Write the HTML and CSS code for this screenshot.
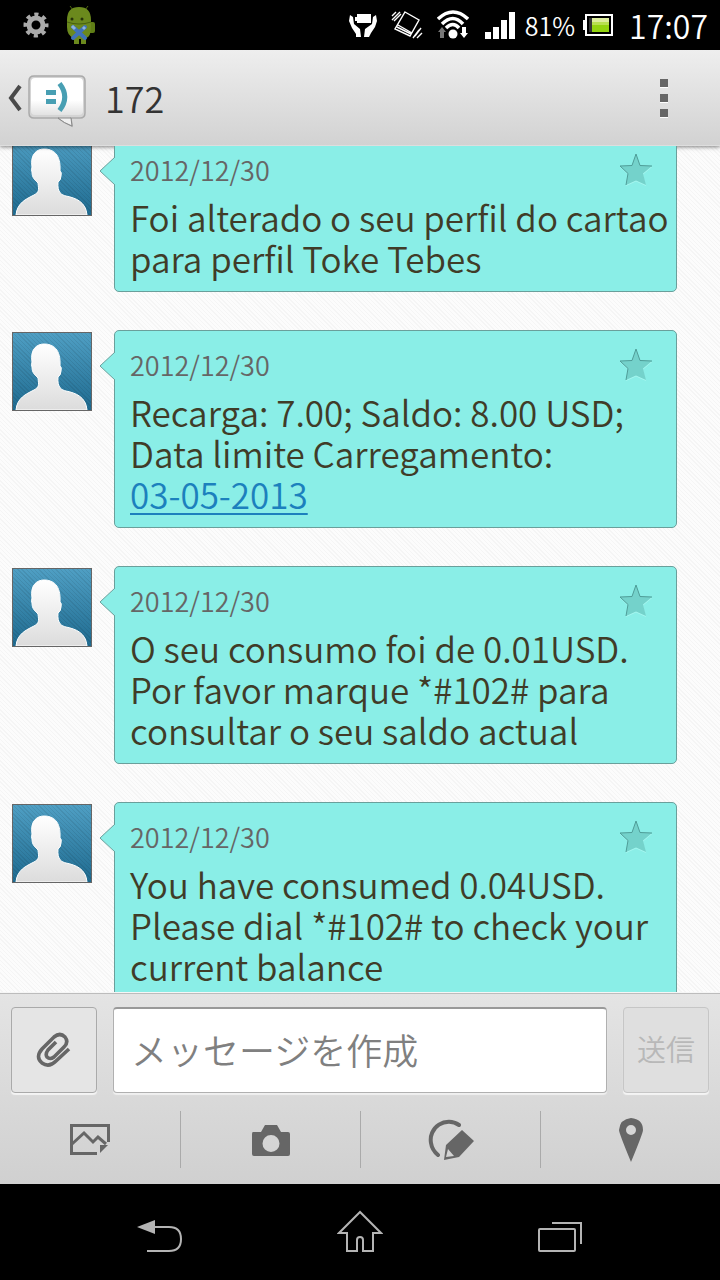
FILE: index.html
```html
<!DOCTYPE html>
<html lang="ja">
<head>
<meta charset="utf-8">
<meta name="viewport" content="width=device-width, initial-scale=1">
<title>172</title>
<link rel="stylesheet" href="styles.css">
</head>
<body>
<svg class="defs" aria-hidden="true">
  <defs>
    <linearGradient id="skin" x1="0" y1="0" x2="0" y2="1"><stop offset="0" stop-color="#fff"/><stop offset="1" stop-color="#dcdcdc"/></linearGradient>
    <symbol id="person" viewBox="0 0 78 77">
      <path d="M3 77C4 65 13 61 21 57C26 54 26 53 25 45C22 42 19 40 19 34Q18 32 19 29C17 16 24 11 31 11C40 11 48 16 47 33Q49 34 48 38Q48 42 45 44C44 55 49 57 53 58C63 60 73 64 74 77Z" fill="url(#skin)" stroke="#fff"/>
    </symbol>
    <symbol id="star" viewBox="0 0 36 36">
      <path d="M18 2L22 13.500L34 14L25 21.500L28 33L18 28.500L8 33L10 21.500L2 14L14 13.500Z" fill="#a6f7f0" transform="translate(0 1)"/>
      <path d="M18 2L22 13.500L34 14L25 21.500L28 33L18 28.500L8 33L10 21.500L2 14L14 13.500Z" fill="#74d2cb"/>
      <path d="M8 33L10 21.500L2 14L14 13.500L18 2L22 13.500L34 14" fill="none" stroke="#4f9d98"/>
    </symbol>
  </defs>
</svg>
<div class="phone">
  <div class="status">
    <svg width="26" height="26" viewBox="0 0 26 26"><g fill="none" stroke="#aaa"><circle cx="13" cy="13" r="7" stroke-width="5"/><circle cx="13" cy="13" r="10.500" stroke-width="4" stroke-dasharray="4.100 4.147" stroke-dashoffset="2"/></g></svg>
    <svg class="droid" width="32" height="40" viewBox="0 0 32 40">
      <path d="M5 1L8 5M23 1L20 5" stroke="#4d6413" stroke-width="1"/>
      <rect x="22" y="17" width="8" height="11" rx="2" fill="#5f7d16"/>
      <path d="M2 15Q2 2 14 2Q26 2 26 15V22Q26 32 21 33V39H16V34H14V39H9V33Q2 31 2 22Z" fill="#6b891d"/>
      <path d="M2 17Q14 21 26 17" fill="none" stroke="#47600f"/>
      <circle cx="7" cy="14" r="1.500" fill="#26330a"/><circle cx="17" cy="14" r="1.500" fill="#26330a"/>
      <path d="M8 22L20 33M20 22L8 33" stroke="#3f72b8" stroke-width="4" stroke-linecap="round"/>
      <path d="M7 21L10 24M20 22L18 24" stroke="#8fb3de" stroke-width="3"/>
    </svg>
    <span class="grow"></span>
    <svg class="hands" width="28" height="24" viewBox="0 0 28 24" fill="#fff"><path d="M8 1H22V10H8V8H6V4H8Z"/><path d="M1 2L4 4L5 11L11 16L12 24H7V21L3 15L0 8ZM27 2L24 4L23 11L16 16L15 24H20L22 20L26 14L28 8Z"/></svg>
    <svg class="vib" width="32" height="28" viewBox="0 0 32 28" fill="none" stroke="#fff" stroke-width="1.400"><path d="M14 1L28 9L19 25L4 18ZM7 14L21 22M6 16L20 23M1 5L5 1M1 9L9 1M3 10L10 3M24 25L30 17M22 27L28 19M26 27L31 22"/></svg>
    <svg class="wifi" width="32" height="30" viewBox="0 0 32 30"><g fill="none" stroke="#fff" stroke-width="3.500"><path d="M1 9Q16 -5 31 9M5 14Q16 3 26 14M9 18Q16 11 22 18"/></g><circle cx="16" cy="24" r="4.500" fill="#fff"/><path d="M1 22L5 17L9 22H7V28H3V22Z" fill="#777"/><path d="M23 23L27 28L31 23H29V17H25V23Z" fill="#fff"/></svg>
    <svg class="signal" width="30" height="28" viewBox="0 0 30 28" fill="#fff"><path d="M0 21H6V28H0ZM8 16H14V28H8ZM16 9H22V28H16ZM24 1H30V28H24Z"/></svg>
    <span class="percent">81%</span>
    <svg class="battery" width="30" height="22" viewBox="0 0 30 22"><rect x="3" y="1" width="26" height="20" fill="none" stroke="#fff" stroke-width="2"/><path d="M0 6H2V16H0Z" fill="#fff"/><rect x="6" y="4" width="3" height="14" fill="#333"/><rect x="9" y="4" width="17" height="14" fill="#93d40f"/><path d="M9 4H26V8H9Z" fill="#dcec9c"/><path d="M9 8H26V11H9Z" fill="#b8e050"/></svg>
    <span class="clock">17:07</span>
  </div>

  <header class="bar">
    <button class="up" aria-label="戻る">
      <svg width="80" height="54" viewBox="0 0 80 54">
        <defs><linearGradient id="face" x1="0" y1="0" x2="0" y2="1"><stop offset="0" stop-color="#fff"/><stop offset=".6" stop-color="#fff"/><stop offset="1" stop-color="#e2e2e2"/></linearGradient></defs>
        <path d="M12 11L3 23L12 35" fill="none" stroke="#4a4a4a" stroke-width="4"/>
        <path d="M26 1H72Q77 1 77 6V38Q77 43 72 43H63L64 51Q56 48 50 43H26Q21 43 21 38V6Q21 1 26 1Z" fill="#d4d4d4" stroke="#aaa" stroke-width="1.500"/>
        <path d="M50 43H63L64 51Q56 48 50 43Z" fill="#f0f0f0" stroke="#888"/>
        <rect x="23" y="3" width="52" height="37" rx="4" fill="url(#face)"/>
        <path d="M38 15H48V20H38ZM38 24H48V29H38Z" fill="#489fb3"/>
        <path d="M51.500 8.500Q62 22 51.500 35.500" fill="none" stroke="#489fb3" stroke-width="5"/>
      </svg>
    </button>
    <h1 class="title">172</h1>
    <button class="more" aria-label="メニュー"><i></i><i></i><i></i></button>
  </header>

  <main class="list">
    <div class="thread">
      <article class="msg">
        <svg class="avatar" role="img" aria-label="172"><use href="#person"/></svg>
        <div class="bubble">
          <svg class="tail" viewBox="0 0 16 28"><path d="M16 0L1 14L16 28" fill="#8aeee7" stroke="#6a9f9b"/></svg>
          <div class="meta"><time>2012/12/30</time><button class="fav" aria-label="スター"><svg width="36" height="36"><use href="#star"/></svg></button></div>
          <p class="text">Foi alterado o seu perfil do cartao<br>para perfil Toke Tebes</p>
        </div>
      </article>
      <article class="msg">
        <svg class="avatar" role="img" aria-label="172"><use href="#person"/></svg>
        <div class="bubble">
          <svg class="tail" viewBox="0 0 16 28"><path d="M16 0L1 14L16 28" fill="#8aeee7" stroke="#6a9f9b"/></svg>
          <div class="meta"><time>2012/12/30</time><button class="fav" aria-label="スター"><svg width="36" height="36"><use href="#star"/></svg></button></div>
          <p class="text">Recarga: 7.00; Saldo: 8.00 USD;<br>Data limite Carregamento:<br><a href="#">03-05-2013</a></p>
        </div>
      </article>
      <article class="msg">
        <svg class="avatar" role="img" aria-label="172"><use href="#person"/></svg>
        <div class="bubble">
          <svg class="tail" viewBox="0 0 16 28"><path d="M16 0L1 14L16 28" fill="#8aeee7" stroke="#6a9f9b"/></svg>
          <div class="meta"><time>2012/12/30</time><button class="fav" aria-label="スター"><svg width="36" height="36"><use href="#star"/></svg></button></div>
          <p class="text">O seu consumo foi de 0.01USD.<br>Por favor marque *#102# para<br>consultar o seu saldo actual</p>
        </div>
      </article>
      <article class="msg">
        <svg class="avatar" role="img" aria-label="172"><use href="#person"/></svg>
        <div class="bubble">
          <svg class="tail" viewBox="0 0 16 28"><path d="M16 0L1 14L16 28" fill="#8aeee7" stroke="#6a9f9b"/></svg>
          <div class="meta"><time>2012/12/30</time><button class="fav" aria-label="スター"><svg width="36" height="36"><use href="#star"/></svg></button></div>
          <p class="text">You have consumed 0.04USD.<br>Please dial *#102# to check your<br>current balance</p>
        </div>
      </article>
    </div>
  </main>

  <footer class="composer">
    <form class="compose">
      <button type="button" class="key" aria-label="添付">
        <svg width="36" height="36" viewBox="0 0 36 36" fill="none" stroke="#666" stroke-width="3.600"><path d="M33 17L20 29Q13 36 6 31Q-1 25 6 17L18 5Q24 0 29 5Q33 10 28 15L18 25Q14 28 11 25Q9 22 12 18L20 10"/></svg>
      </button>
      <input class="field" type="text" aria-label="メッセージ" placeholder="メッセージを作成">
      <button type="button" class="key send" disabled>送信</button>
    </form>
    <div class="tools">
      <button aria-label="画像"><svg width="40" height="32" viewBox="0 0 40 32" fill="none" stroke="#666" stroke-width="3"><path d="M27 29.500H1.500V1.500H38.500V18M2 20L14 9L23 18L28 13L36 20"/><path d="M30 21H38L30 29Z" fill="#666" stroke="none"/></svg></button>
      <button aria-label="カメラ"><svg width="38" height="32" viewBox="0 0 38 32"><path fill="#666" fill-rule="evenodd" d="M1 8H9L13 1H25L29 8H36Q38 8 38 10V30Q38 32 36 32H2Q0 32 0 30V10Q0 8 1 8ZM19 11A8.500 8.500 0 1 0 19 28A8.500 8.500 0 1 0 19 11Z"/></svg></button>
      <button aria-label="手書き"><svg width="46" height="42" viewBox="0 0 46 42"><path d="M31 6A18 18 0 0 0 3 24Q4 31 10 36" fill="none" stroke="#666" stroke-width="4" stroke-linecap="round"/><path fill="#666" fill-rule="evenodd" d="M34 11L46 22L31 38L16 41L18 26ZM20 30L18 38L26 37Z"/></svg></button>
      <button aria-label="位置情報"><svg width="24" height="44" viewBox="0 0 24 44"><path fill="#666" fill-rule="evenodd" d="M12 0Q24 1 24 12Q24 15 12 44Q0 15 0 12Q1 1 12 0ZM12 7A5 5 0 1 0 12 17A5 5 0 1 0 12 7Z"/></svg></button>
    </div>
  </footer>

  <nav class="nav">
    <button aria-label="戻る"><svg width="46" height="44" viewBox="0 0 46 44"><path d="M18 17H32Q44 17 44 29Q44 41 32 41H10" fill="none" stroke="#b4b4b4" stroke-width="2"/><path d="M0 17L18 10V24Z" fill="#b4b4b4"/></svg></button>
    <button aria-label="ホーム"><svg width="46" height="44" viewBox="0 0 46 44" fill="none" stroke="#b4b4b4" stroke-width="2"><path d="M23 2L2 23H10V41H20V30Q20 27 23 27Q26 27 26 30V41H36V23H44Z"/></svg></button>
    <button aria-label="履歴"><svg width="46" height="44" viewBox="0 0 46 44" fill="none" stroke="#b4b4b4" stroke-width="2"><rect x="2" y="19" width="36" height="22" rx="1"/><path d="M15 13H44V34"/></svg></button>
  </nav>
</div>
</body>
</html>
```
FILE: styles.css
```css
* {
  box-sizing: border-box;
}

body {
  margin: 0;
  background: #000;
  font-family: "Noto Sans CJK JP", "Noto Sans", sans-serif;
  font-weight: 350;
}

button {
  margin: 0;
  padding: 0;
  border: 0;
  background: none;
  font: inherit;
  color: inherit;
}

svg {
  display: block;
  flex: none;
}

.defs {
  position: absolute;
  width: 0;
  height: 0;
}

.phone {
  display: flex;
  flex-direction: column;
  height: 100vh;
}

/* Status bar */
.status {
  display: flex;
  flex: none;
  align-items: center;
  height: 50px;
  padding: 0 12px 0 23px;
  background: #000;
  color: #fff;
}

.grow {
  flex: 1;
}

.droid {
  margin-left: 16px;
}

.vib,
.wifi {
  margin-left: 14px;
}

.signal {
  margin-left: 16px;
}

.percent {
  margin-left: 10px;
  font-size: 25px;
}

.battery {
  margin-left: 8px;
}

.clock {
  margin-left: 16px;
  font-size: 32px;
  line-height: 48px;
}

/* Title bar */
.bar {
  position: relative;
  display: flex;
  flex: none;
  align-items: center;
  height: 96px;
  padding: 0 40px 0 8px;
  background: linear-gradient(#eee, #d2d2d2);
  border-bottom: 1px solid #dedede;
  box-shadow: 0 1px 4px rgba(0, 0, 0, .5);
}

.up {
  padding-top: 8px;
}

.title {
  flex: 1;
  margin: 0 0 2px 17px;
  font-size: 36px;
  font-weight: 350;
  color: #333;
}

.more {
  display: grid;
  gap: 7px;
  padding: 8px 12px;
}

.more i {
  width: 8px;
  height: 8px;
  background: #666;
  box-shadow: 0 1px #fff;
}

/* Conversation */
.list {
  flex: 1;
  min-height: 0;
  overflow: hidden;
  background: repeating-linear-gradient(45deg, #fcfcfc 0 2px, #f5f5f5 2px 3px);
}

.thread {
  display: grid;
  grid-template-columns: minmax(0, 1fr);
  gap: 38px;
  margin-top: -11px;
  padding: 0 43px 8px 12px;
}

.msg {
  display: flex;
  align-items: flex-start;
  gap: 22px;
}

.avatar {
  width: 80px;
  height: 79px;
  margin-top: 2px;
  border: 1px solid #666;
  background:
    repeating-linear-gradient(45deg, rgba(0, 0, 0, .08) 0 1px, transparent 1px 3px),
    linear-gradient(#4f9fc4, #1f6b90);
}

.bubble {
  position: relative;
  flex: 1;
  min-width: 0;
  padding: 14px 15px 13px;
  border: 1px solid #6a9f9b;
  border-radius: 5px;
  background: #8aeee7;
}

.tail {
  position: absolute;
  top: 21px;
  left: -16px;
  width: 16px;
  height: 28px;
}

.meta {
  display: flex;
  align-items: center;
  justify-content: space-between;
  height: 40px;
  margin-bottom: 6px;
  padding-right: 7px;
  font-size: 27px;
  line-height: 40px;
  color: #666;
}

.text {
  margin: 0;
  font-size: 35px;
  line-height: 41px;
  color: #403c28;
  white-space: nowrap;
}

.text a {
  color: #1c80bd;
  text-decoration-thickness: 2px;
  text-underline-offset: 4px;
}

/* Composer */
.composer {
  position: relative;
  flex: none;
  padding: 13px 11px 16px;
  background: linear-gradient(#e4e4e4, #dadada 50%, #d0d0d0);
  border-top: 1px solid #bcbcbc;
  box-shadow: 0 -1px #f6f6f6;
}

.compose {
  display: flex;
  gap: 16px;
}

.key {
  display: grid;
  place-items: center;
  flex: none;
  width: 86px;
  height: 86px;
  border: 1px solid #aaa;
  border-radius: 4px;
  background: #e5e5e5;
  box-shadow: 0 2px 1px #f4f4f4;
  font-size: 29px;
}

.send {
  padding-bottom: 4px;
  border-color: #c6c6c6;
  background: #dfdfdf;
  color: #b8b8b8;
}

.field {
  flex: 1;
  min-width: 0;
  height: 86px;
  padding: 0 17px 4px;
  border: 1px solid #b0b0b0;
  border-top: 2px solid #999;
  border-radius: 4px;
  background: #fff;
  box-shadow: 0 2px 1px #f0f0f0;
  font: inherit;
  font-size: 36px;
  color: #333;
}

.field::placeholder {
  color: #808080;
}

.tools {
  display: grid;
  grid-template-columns: repeat(4, 1fr);
  height: 57px;
  margin: 18px -11px 0;
}

.tools button {
  display: grid;
  place-items: center;
}

.tools button + button {
  border-left: 1px solid #aaa;
}

/* System keys */
.nav {
  display: flex;
  flex: none;
  align-items: center;
  justify-content: space-between;
  height: 96px;
  padding: 0 137px;
  background: #000;
}
```
